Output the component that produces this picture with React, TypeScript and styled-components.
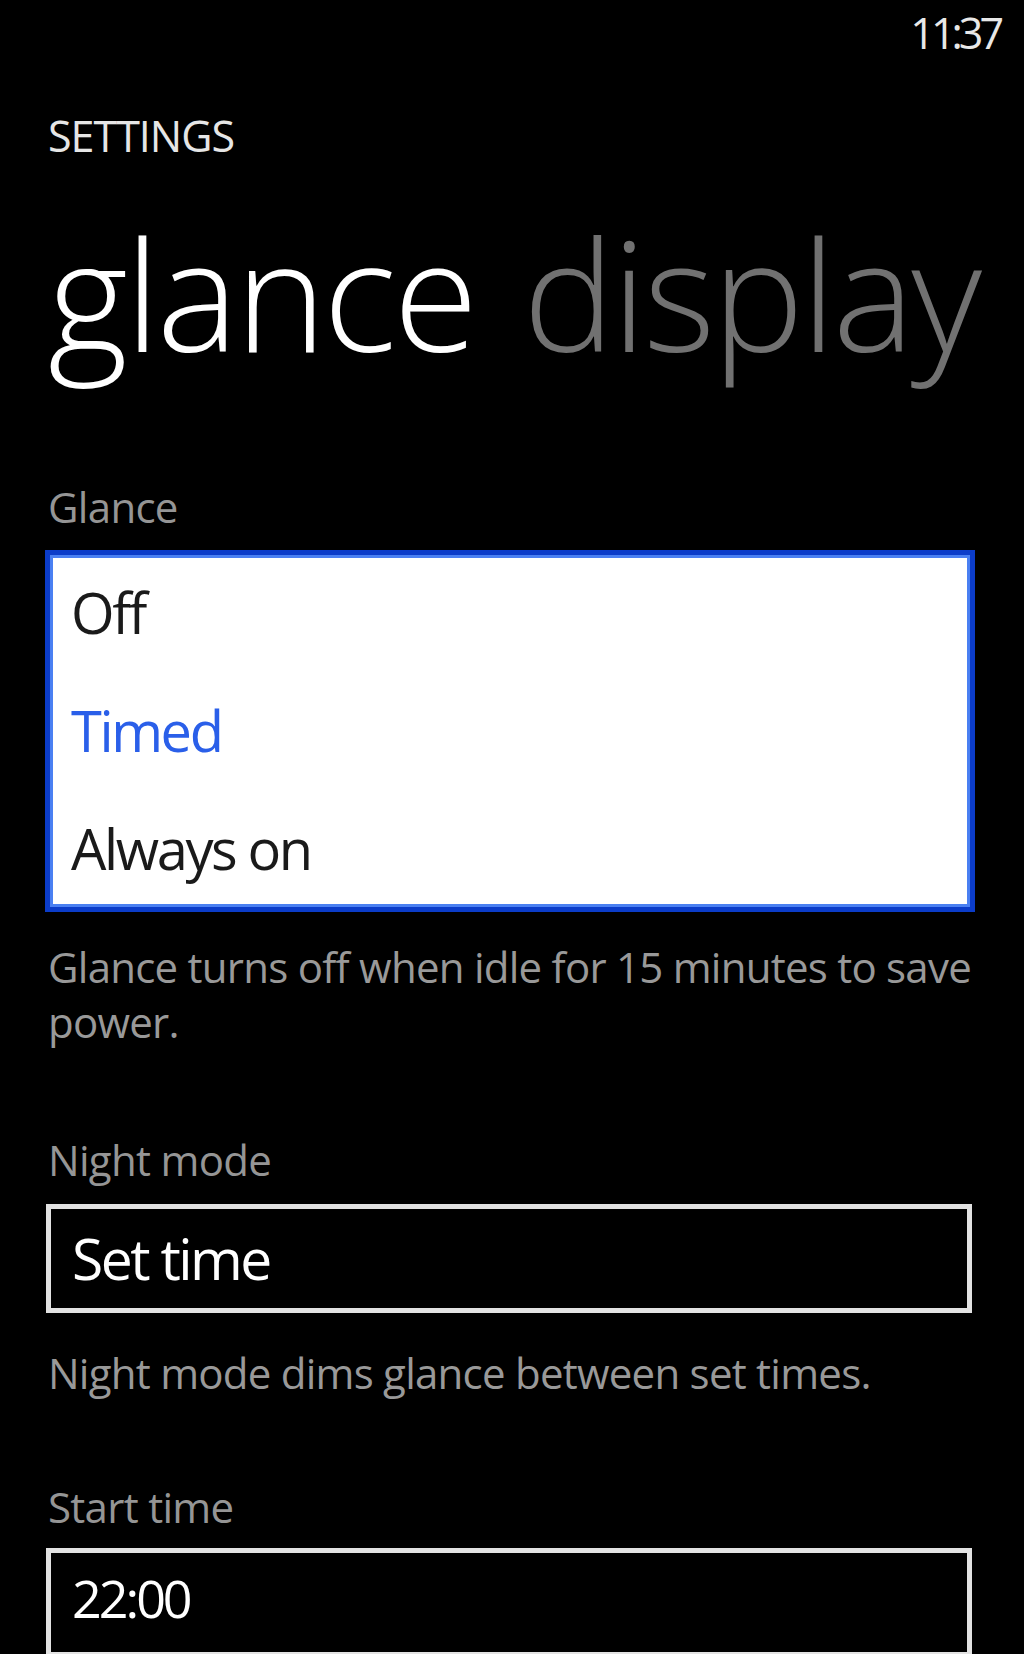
import React from "react";
import styled, { createGlobalStyle } from "styled-components";

const GlobalStyle = createGlobalStyle`
  html, body {
    margin: 0;
    padding: 0;
    background: #000;
  }
  body {
    font-family: "Open Sans", "Noto Sans", sans-serif;
    color: #fff;
  }
`;

const Screen = styled.div`
  width: 1024px;
  min-height: 1654px;
  background: #000;
  overflow: hidden;
`;

const StatusBar = styled.div`
  height: 60px;
  display: flex;
  justify-content: flex-end;
  align-items: flex-start;
  padding: 11px 24px 0 0;
  box-sizing: border-box;
`;

const Clock = styled.span`
  font-size: 43px;
  line-height: 1;
  letter-spacing: -4px;
  color: #e8e8e8;
`;

const Header = styled.header`
  padding-left: 48px;
  display: flex;
  flex-direction: column;
`;

const AppTitle = styled.div`
  margin-top: 54px;
  font-size: 43px;
  line-height: 1;
  letter-spacing: -1px;
  color: #e6e6e6;
  text-transform: uppercase;
`;

const Pivot = styled.div`
  margin-top: 58px;
  display: flex;
  gap: 48px;
  white-space: nowrap;
`;

const PivotItem = styled.span<{ $active?: boolean }>`
  font-size: 154px;
  font-weight: 300;
  line-height: 1;
  letter-spacing: -3px;
  color: ${(p) => (p.$active ? "#ffffff" : "#717171")};
`;

const Content = styled.main`
  padding: 0 49px 0 45px;
  display: flex;
  flex-direction: column;
`;

const Label = styled.div<{ $top: number }>`
  margin-top: ${(p) => p.$top}px;
  padding-left: 3px;
  font-size: 42px;
  line-height: 55px;
  letter-spacing: -0.7px;
  color: #959595;
`;

const Hint = styled.p<{ $top: number }>`
  margin: ${(p) => p.$top}px 0 0 0;
  padding-left: 3px;
  font-size: 42px;
  line-height: 55px;
  letter-spacing: -0.75px;
  color: #999;
`;

const ListPicker = styled.div`
  margin-top: 16px;
  background: #fff;
  border: 5px solid #0b3cc9;
  box-shadow: inset 0 0 0 3px #4a80f2;
  padding: 3px 0 5px 0;
  display: flex;
  flex-direction: column;
  gap: 10px;
`;

const PickerItem = styled.div<{ $selected?: boolean }>`
  padding-left: 21px;
  font-size: 56px;
  line-height: 108px;
  letter-spacing: -2.4px;
  color: ${(p) => (p.$selected ? "#2a5fe9" : "#1a1a1a")};
`;

const TextBox = styled.div<{ $top: number }>`
  margin: ${(p) => p.$top}px 3px 0 1px;
  border: 5px solid #e2e2e2;
  height: 99px;
  padding-left: 21px;
  display: flex;
  align-items: flex-start;
`;

const TextBoxValue = styled.span<{ $size: number; $line: number; $track: number }>`
  font-size: ${(p) => p.$size}px;
  line-height: ${(p) => p.$line}px;
  letter-spacing: ${(p) => p.$track}px;
  color: #fff;
`;

export default function App() {
  return (
    <Screen>
      <GlobalStyle />
      <StatusBar>
        <Clock>11:37</Clock>
      </StatusBar>
      <Header>
        <AppTitle>Settings</AppTitle>
        <Pivot>
          <PivotItem $active>glance</PivotItem>
          <PivotItem>display</PivotItem>
        </Pivot>
      </Header>
      <Content>
        <Label $top={110}>Glance</Label>
        <ListPicker>
          <PickerItem>Off</PickerItem>
          <PickerItem $selected>Timed</PickerItem>
          <PickerItem>Always on</PickerItem>
        </ListPicker>
        <Hint $top={27}>
          Glance turns off when idle for 15 minutes to save power.
        </Hint>
        <Label $top={83}>Night mode</Label>
        <TextBox $top={17}>
          <TextBoxValue $size={57} $line={99} $track={-2.5}>
            Set time
          </TextBoxValue>
        </TextBox>
        <Hint $top={32}>Night mode dims glance between set times.</Hint>
        <Label $top={79}>Start time</Label>
        <TextBox $top={14}>
          <TextBoxValue $size={52} $line={90} $track={-3}>
            22:00
          </TextBoxValue>
        </TextBox>
      </Content>
    </Screen>
  );
}
